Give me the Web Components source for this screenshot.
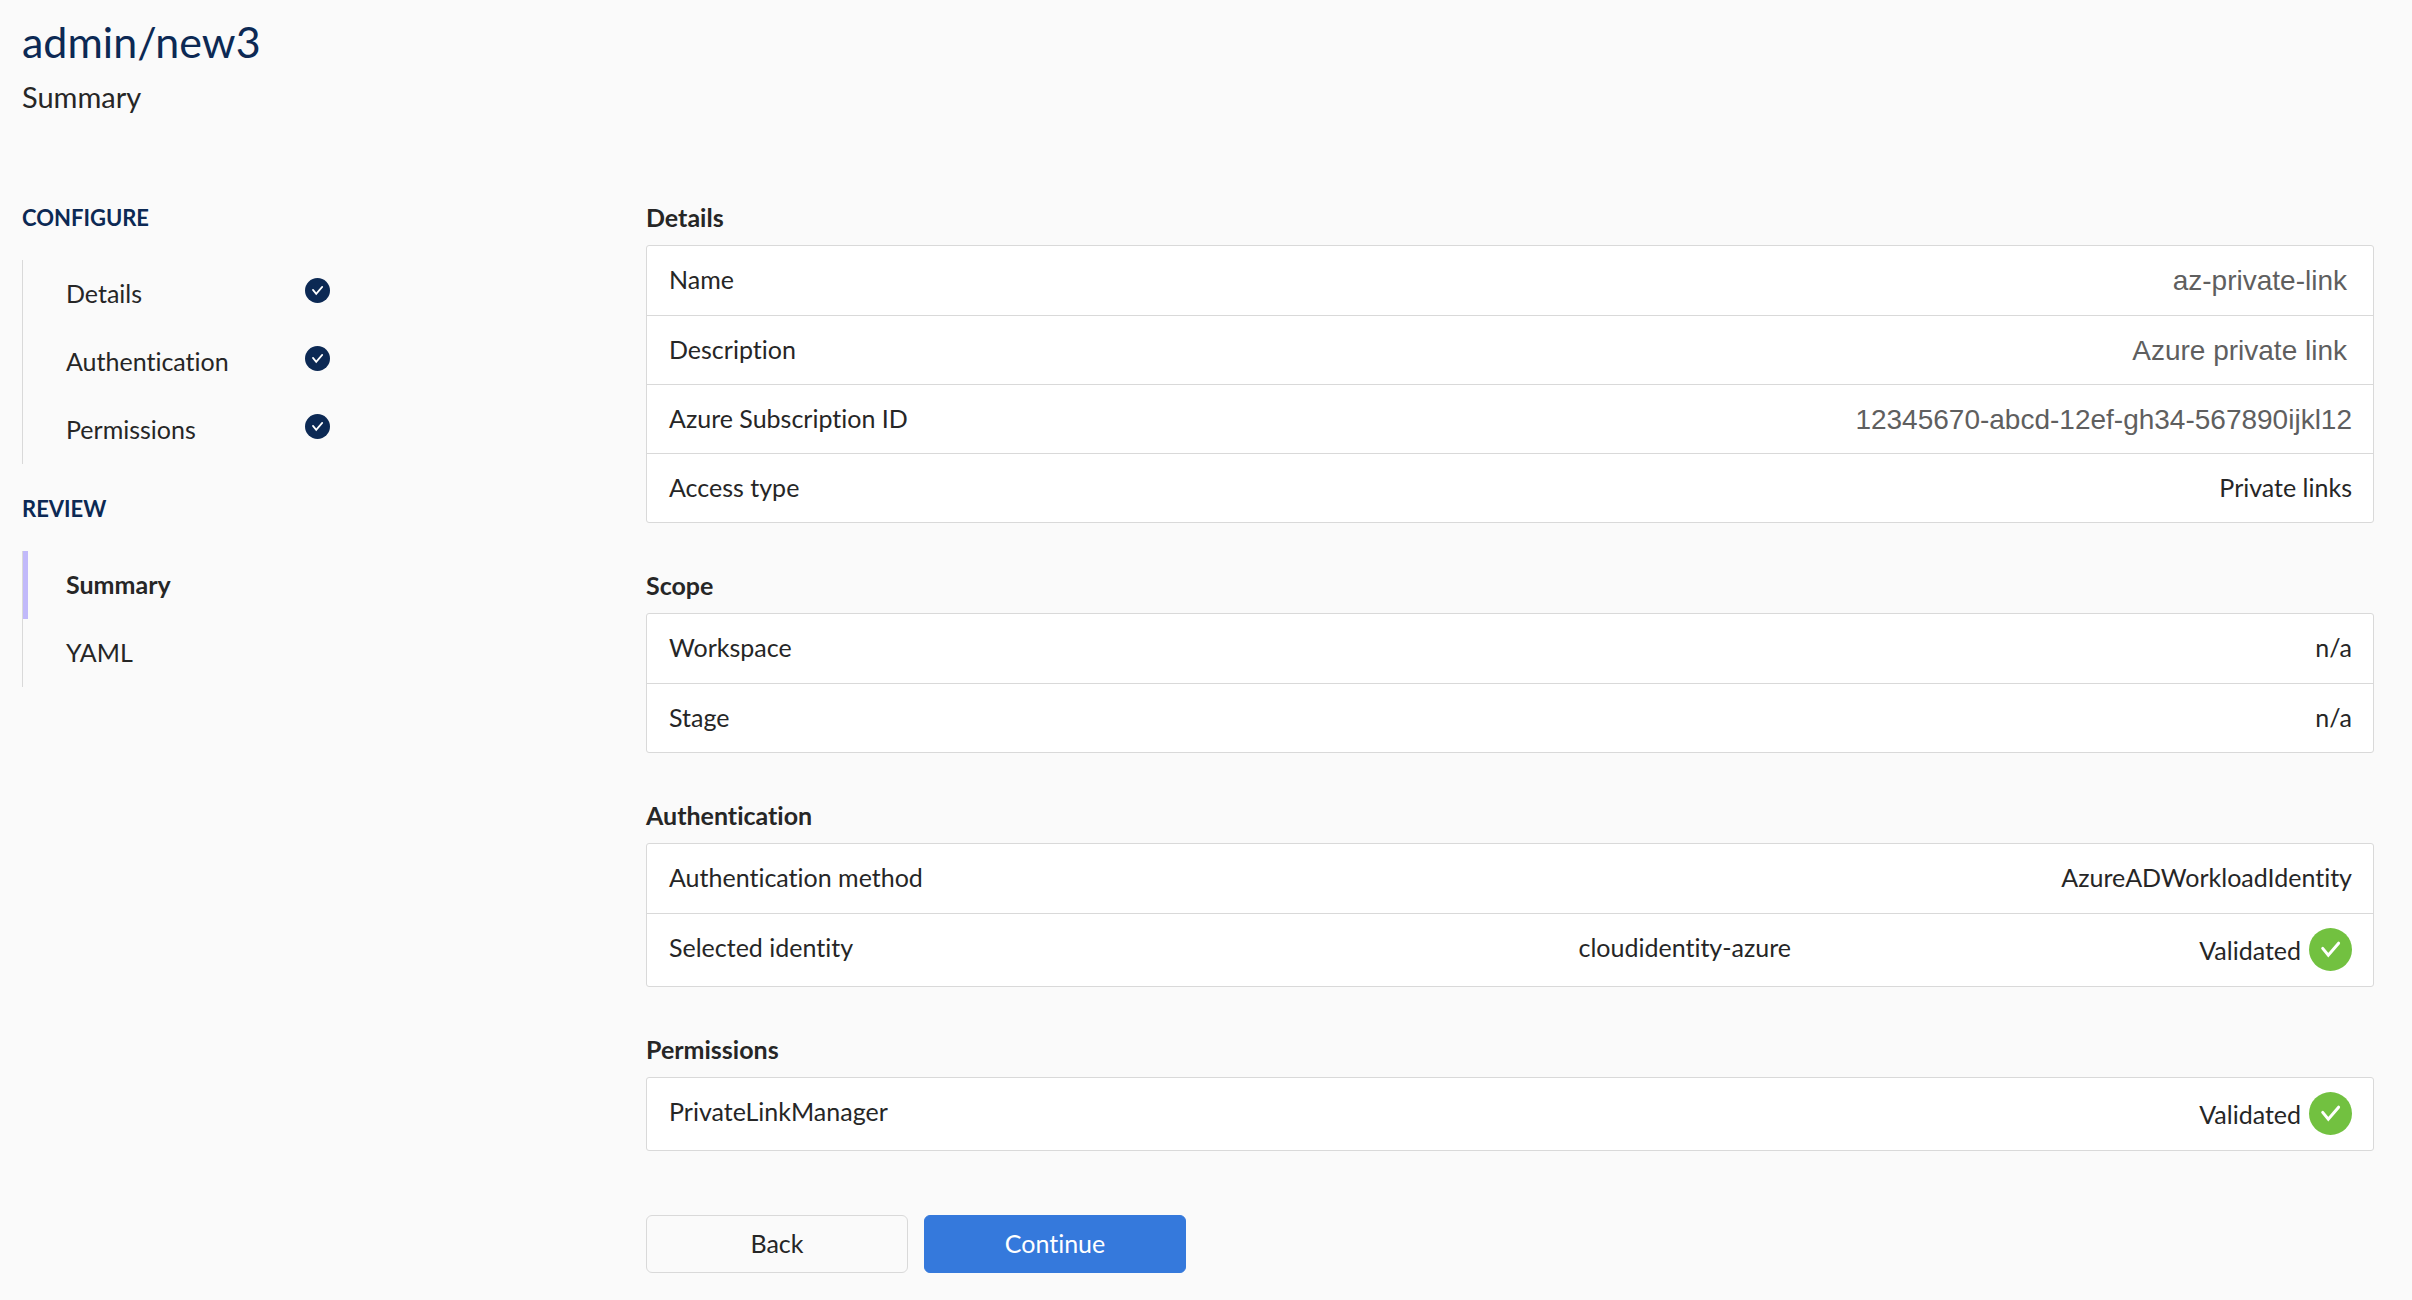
<!DOCTYPE html>
<html lang="en">
<head>
<meta charset="utf-8">
<meta name="viewport" content="width=device-width, initial-scale=1">
<title>admin/new3 – Summary</title>
<style>
  :root {
    --ink: #262626;
    --navy: #0c2954;
    --muted: #5f5f5f;
    --line: #d9d9d9;
    --accent: #c1b9fa;
    --primary: #3579dc;
    --success: #72c140;
  }
  body {
    margin: 0;
    background: #fafafa;
    color: var(--ink);
    font: 25px/30px Lato, "Liberation Sans", sans-serif;
    font-variant-ligatures: none;
  }
</style>
</head>
<body>
<wizard-page>
  <page-title slot="header" subtitle="Summary">admin/new3</page-title>

  <step-group slot="steps" heading="Configure">
    <step-link href="#details" done>Details</step-link>
    <step-link href="#authentication" done>Authentication</step-link>
    <step-link href="#permissions" done>Permissions</step-link>
  </step-group>
  <step-group slot="steps" heading="Review">
    <step-link href="#summary" current>Summary</step-link>
    <step-link href="#yaml">YAML</step-link>
  </step-group>

  <summary-section heading="Details">
    <summary-row label="Name" muted inset>az-private-link</summary-row>
    <summary-row label="Description" muted inset>Azure private link</summary-row>
    <summary-row label="Azure Subscription ID" muted>12345670-abcd-12ef-gh34-567890ijkl12</summary-row>
    <summary-row label="Access type">Private links</summary-row>
  </summary-section>
  <summary-section heading="Scope">
    <summary-row label="Workspace">n/a</summary-row>
    <summary-row label="Stage">n/a</summary-row>
  </summary-section>
  <summary-section heading="Authentication">
    <summary-row label="Authentication method">AzureADWorkloadIdentity</summary-row>
    <summary-row label="Selected identity" validated>cloudidentity-azure</summary-row>
  </summary-section>
  <summary-section heading="Permissions">
    <summary-row label="PrivateLinkManager" validated></summary-row>
  </summary-section>

  <action-button slot="actions">Back</action-button>
  <action-button slot="actions" primary>Continue</action-button>
</wizard-page>

<script>
const define = (name, render) => customElements.define(name, class extends HTMLElement {
  connectedCallback() {
    if (this.shadowRoot) return;
    this.attachShadow({ mode: 'open' }).innerHTML = render(this);
  }
});

define('wizard-page', () => `
  <style>
    :host { display: block; padding: 16px 38px 26px 22px; }
    .body { display: grid; grid-template-columns: 624px minmax(0, 1fr); align-items: start; margin-top: 87px; }
    nav { display: flex; flex-direction: column; gap: 29px; }
    .sections { display: flex; flex-direction: column; gap: 47px; }
    .actions { display: flex; gap: 16px; margin-top: 64px; }
  </style>
  <header><slot name="header"></slot></header>
  <div class="body">
    <nav aria-label="Steps"><slot name="steps"></slot></nav>
    <main>
      <div class="sections"><slot></slot></div>
      <div class="actions"><slot name="actions"></slot></div>
    </main>
  </div>`);

define('page-title', el => `
  <style>
    :host { display: flex; flex-direction: column; gap: 11px; }
    h1, p { margin: 0; font-weight: 400; }
    h1 { font-size: 43px; line-height: 52px; color: var(--navy); }
    p { font-size: 29px; line-height: 36px; }
  </style>
  <h1><slot></slot></h1>
  <p>${el.getAttribute('subtitle')}</p>`);

define('check-badge', () => `
  <style>
    :host { display: block; flex: none; width: var(--badge-size, 43px); height: var(--badge-size, 43px); }
    svg { display: block; width: 100%; height: 100%; }
    circle { fill: var(--badge-color, var(--success)); }
    path { fill: none; stroke: #fff; stroke-width: 3; stroke-linecap: round; stroke-linejoin: miter; }
  </style>
  <svg viewBox="0 0 43 43" aria-hidden="true">
    <circle cx="21.5" cy="21.5" r="21.5"/>
    <path d="M13.7 20.4 19.3 27.2 29.6 15.2"/>
  </svg>`);

define('step-group', el => `
  <style>
    :host { display: block; }
    h2 { margin: 0 0 26px; font-size: 22px; line-height: 32px; font-weight: 700; text-transform: uppercase; color: var(--navy); }
    .list { width: 320px; border-left: 1px solid var(--line); }
  </style>
  <h2>${el.getAttribute('heading')}</h2>
  <div class="list"><slot></slot></div>`);

define('step-link', el => `
  <style>
    :host { display: block; }
    a { display: flex; align-items: flex-start; justify-content: space-between; box-sizing: border-box;
        height: 68px; padding: 18px 13px 0 38px; border-left: 5px solid transparent;
        color: var(--ink); text-decoration: none; }
    :host([current]) a { border-left-color: var(--accent); font-weight: 700; }
    check-badge { --badge-size: 25px; --badge-color: var(--navy); }
  </style>
  <a href="${el.getAttribute('href')}"${el.hasAttribute('current') ? ' aria-current="step"' : ''}>
    <span><slot></slot></span>${el.hasAttribute('done') ? '<check-badge></check-badge>' : ''}
  </a>`);

define('summary-section', el => `
  <style>
    :host { display: block; }
    h2 { margin: 0 0 13px; font-size: 25px; line-height: 30px; font-weight: 700; }
    .panel { border: 1px solid var(--line); border-radius: 3px; background: #fff; }
    ::slotted(summary-row:not(:first-child)) { border-top: 1px solid var(--line); }
  </style>
  <h2>${el.getAttribute('heading')}</h2>
  <div class="panel"><slot></slot></div>`);

define('summary-row', el => `
  <style>
    :host { display: block; box-sizing: border-box; min-height: 69px; padding: 0 21px 0 22px; }
    dl { display: grid; grid-template-columns: repeat(3, minmax(0, 1fr)); margin: 0; }
    dt, dd { margin: 0; padding-top: 18px; }
    dd { grid-column: span 2; text-align: right; }
    :host([validated]) dd { grid-column: auto; }
    :host([muted]) dd { padding-top: 20px; color: var(--muted); font-family: "Liberation Sans", Arial, sans-serif; font-size: 28px; }
    :host([inset]) dd { padding-right: 5px; }
    dd.status { display: flex; align-items: center; justify-content: flex-end; gap: 8px; padding: 14px 0 15px; }
  </style>
  <dl>
    <dt>${el.getAttribute('label')}</dt>
    <dd><slot></slot></dd>
    ${el.hasAttribute('validated') ? '<dd class="status"><span>Validated</span><check-badge></check-badge></dd>' : ''}
  </dl>`);

define('action-button', el => `
  <style>
    :host { display: block; }
    button { display: block; box-sizing: border-box; width: 262px; height: 58px; padding: 0 0 3px;
             border: 1px solid var(--line); border-radius: 6px; background: transparent;
             color: var(--ink); font: inherit; font-variant-ligatures: none; cursor: pointer; }
    :host([primary]) button { border-color: var(--primary); background: var(--primary); color: #fff; }
  </style>
  <button type="button"><slot></slot></button>`);
</script>
</body>
</html>
